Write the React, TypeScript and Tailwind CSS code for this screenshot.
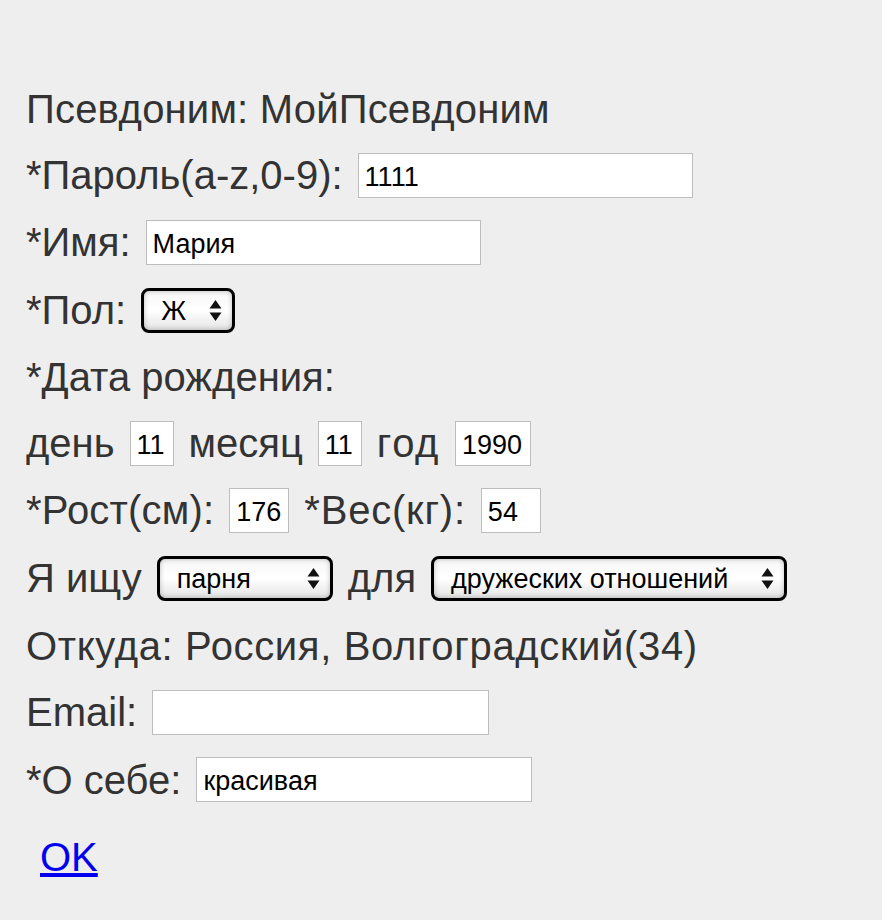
import type { ReactNode } from "react";

function TextBox({ value, width }: { value: string; width: string }) {
  return (
    <div
      className={`${width} flex h-[45px] shrink-0 items-center border border-[#bdbdbd] bg-white px-[6px] pt-[4px] text-[27px] text-black`}
    >
      {value}
    </div>
  );
}

function Arrows() {
  return (
    <svg width="13" height="23" viewBox="0 0 13 23" className="shrink-0">
      <path d="M6.5 1 L12.5 9.5 L0.5 9.5 Z" fill="#111" />
      <path d="M6.5 22 L12.5 13.5 L0.5 13.5 Z" fill="#111" />
    </svg>
  );
}

function SelectBox({ value, width }: { value: string; width: string }) {
  return (
    <div
      className={`${width} flex h-[45px] shrink-0 items-center justify-between rounded-[8px] border-[3px] border-black bg-gradient-to-b from-[#f7f7f7] via-white to-[#e4e4e4] pl-[17px] pr-[10px] text-[27px] text-black shadow-[inset_0_0_5px_rgba(0,0,0,0.25)]`}
    >
      <span className="pt-[2px]">{value}</span>
      <Arrows />
    </div>
  );
}

function Row({ children, h = "h-[68px]" }: { children: ReactNode; h?: string }) {
  return <div className={`flex ${h} items-center gap-[15px] whitespace-nowrap`}>{children}</div>;
}

export default function App() {
  return (
    <div
      className="min-h-[920px] bg-[#eeeeee] pl-[26px] pt-[76px] text-[40px] text-[#333333]"
      style={{ fontFamily: '"Liberation Sans", Arial, sans-serif' }}
    >
      <Row h="h-[66px]">
        <span className="tracking-[0.2px]">Псевдоним: МойПсевдоним</span>
      </Row>
      <Row h="h-[66px]">
        <span>*Пароль(a-z,0-9):</span>
        <TextBox value="1111" width="w-[335px]" />
      </Row>
      <Row h="h-[68px]">
        <span>*Имя:</span>
        <TextBox value="Мария" width="w-[335px]" />
      </Row>
      <Row h="h-[68px]">
        <span>*Пол:</span>
        <SelectBox value="Ж" width="w-[94px]" />
      </Row>
      <Row h="h-[66px]">*Дата рождения:</Row>
      <Row h="h-[66px]">
        <span>день</span>
        <TextBox value="11" width="w-[44px]" />
        <span>месяц</span>
        <TextBox value="11" width="w-[44px]" />
        <span className="tracking-[1.6px]">год</span>
        <TextBox value="1990" width="w-[76px]" />
      </Row>
      <Row h="h-[68px]">
        <span className="tracking-[0.2px]">*Рост(см):</span>
        <TextBox value="176" width="w-[60px]" />
        <span className="tracking-[0.8px]">*Вес(кг):</span>
        <TextBox value="54" width="w-[60px]" />
      </Row>
      <Row h="h-[68px]">
        <span>Я ищу</span>
        <SelectBox value="парня" width="w-[176px]" />
        <span>для</span>
        <SelectBox value="дружеских отношений" width="w-[356px]" />
      </Row>
      <Row h="h-[67px]">
        <span className="tracking-[0.65px]">Откуда: Россия, Волгоградский(34)</span>
      </Row>
      <Row h="h-[66px]">
        <span>Email:</span>
        <TextBox value="" width="w-[337px]" />
      </Row>
      <Row h="h-[69px]">
        <span>*О себе:</span>
        <TextBox value="красивая" width="w-[336px]" />
      </Row>
      <div className="mt-[13px] pl-[14px]">
        <a href="#" className="text-[#0000ee] underline">
          OK
        </a>
      </div>
    </div>
  );
}
